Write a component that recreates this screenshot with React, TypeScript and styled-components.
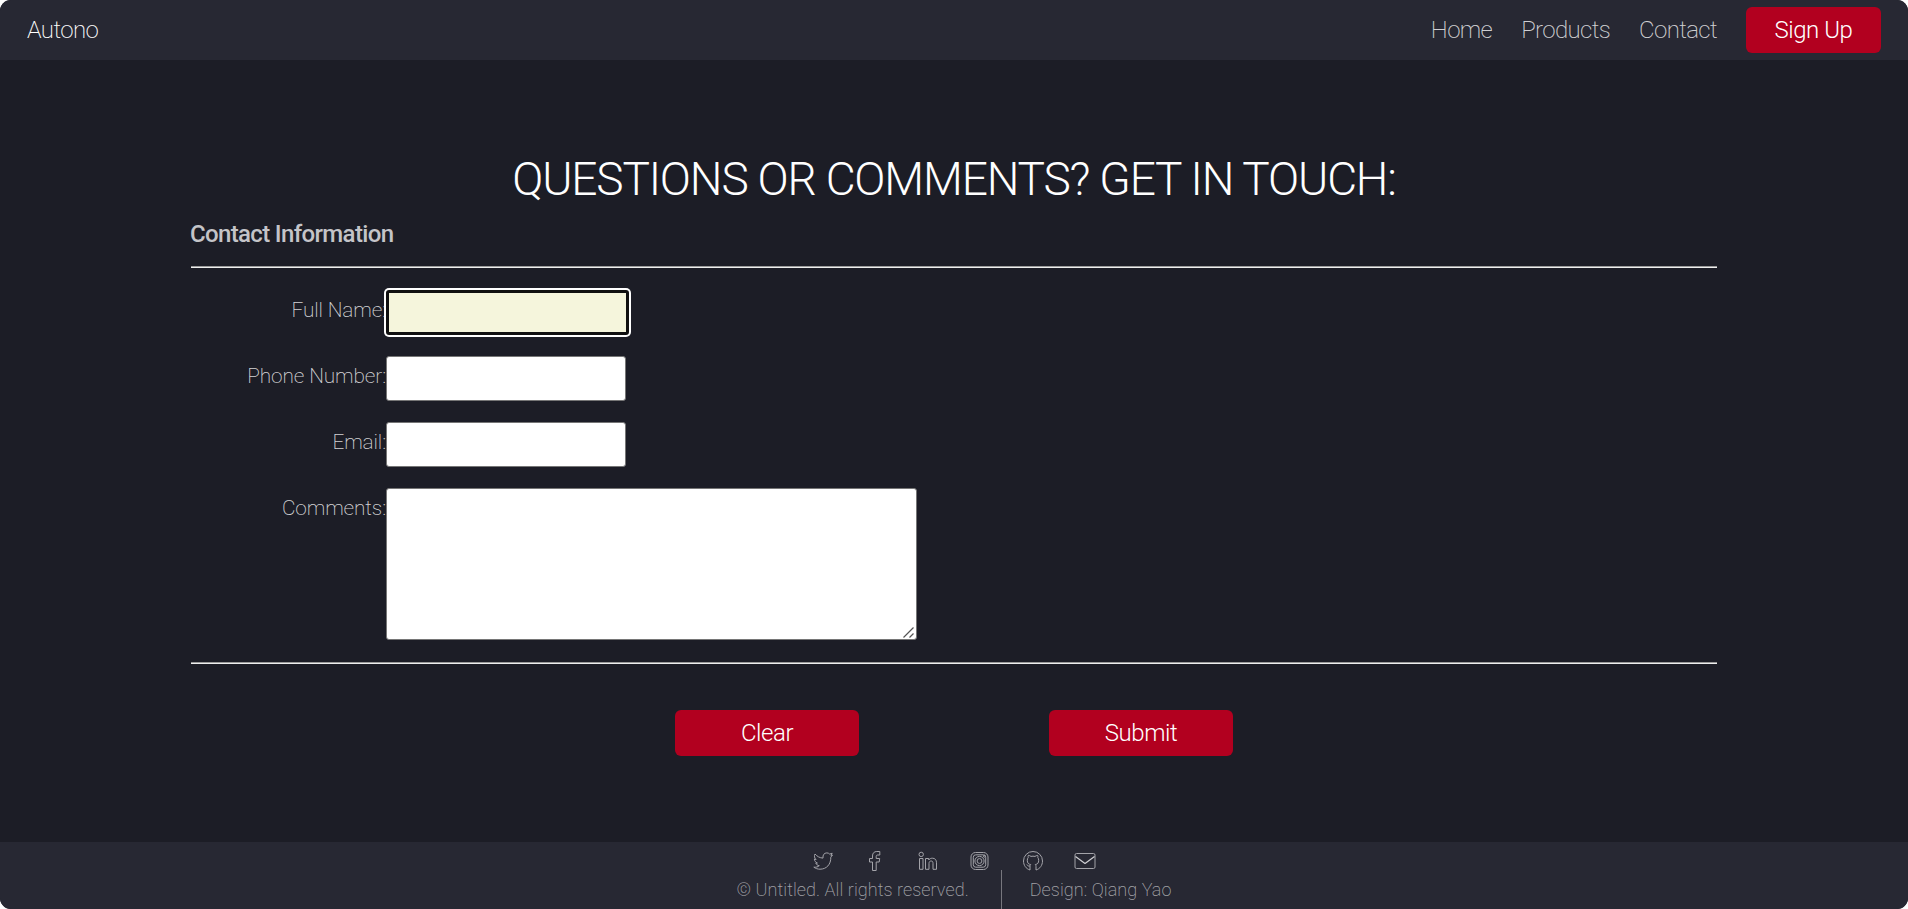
import React from "react";
import styled, { createGlobalStyle } from "styled-components";

const Global = createGlobalStyle`
  html { background: #fff; }
  body { margin: 0; font-family: Roboto, "Liberation Sans", sans-serif; font-weight: 200; color: #fff; }
  *, *::before, *::after { box-sizing: border-box; }
`;

const Page = styled.div`
  display: flex;
  flex-direction: column;
  height: 909px;
  background: #1c1d26;
  border-radius: 11px;
  overflow: hidden;
`;

const Header = styled.header`
  display: flex;
  align-items: center;
  justify-content: space-between;
  height: 60px;
  padding: 0 27px;
  background: #272833;
`;

const Brand = styled.a`
  font-size: 24px;
  line-height: 60px;
  letter-spacing: -0.6px;
  color: #fff;
`;

const Nav = styled.nav`
  display: flex;
  align-items: center;
`;

const NavLink = styled.a`
  margin-right: 29px;
  font-size: 24px;
  line-height: 60px;
  letter-spacing: -0.63px;
  color: rgba(255, 255, 255, 0.8);
`;

const Button = styled.button<{ $width: number }>`
  width: ${(p) => p.$width}px;
  height: 46px;
  padding: 0;
  border: 0;
  border-radius: 6px;
  background: #b2001f;
  color: #fff;
  font-family: inherit;
  font-size: 24px;
  font-weight: 300;
  letter-spacing: -0.45px;
`;

const Main = styled.main`
  flex: 1;
  display: flex;
  flex-direction: column;
  width: 1526px;
  margin: 0 auto;
  padding-top: 91px;
`;

const Title = styled.h1`
  margin: 0;
  font-size: 46px;
  font-weight: 300;
  line-height: 56px;
  letter-spacing: -1.16px;
  text-align: center;
  white-space: nowrap;
`;

const Legend = styled.h2`
  margin: 12px 0 17px -1px;
  font-size: 24px;
  font-weight: 500;
  line-height: 30px;
  letter-spacing: -0.65px;
  color: #c4c4c8;
`;

const Rule = styled.div`
  height: 2px;
  border-top: 1px solid #9a9a9a;
  border-bottom: 1px solid #eee;
`;

const Fields = styled.form`
  display: flex;
  flex-direction: column;
  gap: 21px;
  padding: 22px 0;
`;

const Row = styled.div`
  display: flex;
  align-items: flex-start;
`;

const Label = styled.label`
  width: 195px;
  font-size: 20.8px;
  line-height: 41px;
  letter-spacing: -0.12px;
  text-align: right;
  color: #d2d2d4;
`;

const Input = styled.input<{ $active?: boolean }>`
  width: 240px;
  height: 45px;
  border: 1px solid #767676;
  border-radius: 3px;
  background: ${(p) => (p.$active ? "#f5f5dc" : "#fff")};
  ${(p) =>
    p.$active &&
    `width: 243px; border: 3px solid #101010; border-radius: 3px;
     box-shadow: 0 0 0 2px #fff; outline: none;`}
`;

const CommentBox = styled.div`
  position: relative;
  display: flex;

  svg {
    position: absolute;
    right: 3px;
    bottom: 2px;
    stroke: #555;
    stroke-width: 1.2;
    pointer-events: none;
  }
`;

const TextArea = styled.textarea`
  width: 531px;
  height: 152px;
  border: 1px solid #767676;
  border-radius: 3px;
  background: #fff;
  resize: none;
`;

const Actions = styled.div`
  display: flex;
  justify-content: center;
  gap: 190px;
  padding-top: 46px;
`;

const Footer = styled.footer`
  height: 67px;
  background: #272833;
`;

const Icons = styled.div`
  display: flex;
  justify-content: center;
  gap: 32.4px;
  height: 28px;
  padding-top: 9px;

  svg {
    width: 20px;
    height: 20px;
    overflow: visible;
    fill: none;
    stroke: #a3a3a9;
    stroke-width: 1;
    stroke-linejoin: round;
  }
`;

const Credits = styled.div`
  display: flex;
  justify-content: center;
  height: 39px;
  font-size: 18px;
  line-height: 39px;
  letter-spacing: 0.07px;
  color: rgba(255, 255, 255, 0.58);
`;

const Credit = styled.span`
  padding-right: 32px;

  & + & {
    padding: 0 0 0 28px;
    border-left: 1px solid #77777e;
  }
`;

export default function App() {
  return (
    <>
      <Global />
      <Page>
        <Header>
          <Brand>Autono</Brand>
          <Nav>
            <NavLink>Home</NavLink>
            <NavLink>Products</NavLink>
            <NavLink>Contact</NavLink>
            <Button $width={135}>Sign Up</Button>
          </Nav>
        </Header>
        <Main>
          <Title>QUESTIONS OR COMMENTS? GET IN TOUCH:</Title>
          <Legend>Contact Information</Legend>
          <Rule />
          <Fields>
            <Row><Label>Full Name:</Label><Input $active /></Row>
            <Row><Label>Phone Number:</Label><Input /></Row>
            <Row><Label>Email:</Label><Input /></Row>
            <Row>
              <Label>Comments:</Label>
              <CommentBox>
                <TextArea />
                <svg width="11" height="11" viewBox="0 0 11 11"><path d="M.5 10.500l10-10M6.500 10.500l4-4" /></svg>
              </CommentBox>
            </Row>
          </Fields>
          <Rule />
          <Actions>
            <Button $width={184}>Clear</Button>
            <Button $width={184}>Submit</Button>
          </Actions>
        </Main>
        <Footer>
          <Icons>
            <svg viewBox="0 0 20 20"><path d="M.8 16.2c2.2.2 4-.3 5.500-1.500-1.800-.2-3-1.200-3.500-2.700h1.600C2.500 11.300 1.400 9.900 1.400 8l1.700.5C1.300 6.900 1 5 2 3c2.200 2.500 4.700 3.900 8 4.100C9.600 4 11.200 1.900 13.800 1.900c1.200 0 2.100.4 2.900 1.200l2.500-.9-1.300 2.200 1.600-.3-1.700 2C18 13.500 13.500 18.200 7 18.200c-2.300 0-4.400-.7-6.200-2z" /></svg>
            <svg viewBox="0 0 20 20"><path d="M7.500 19.500V11h-3V7.500h3V5c0-3 1.700-4.500 4.300-4.500h3V4h-2c-1.200 0-1.600.5-1.600 1.500v2h3.500l-.5 3.500h-3v8.500z" /></svg>
            <svg viewBox="0 0 20 20"><circle cx="3.200" cy="3.400" r="2.200" /><path d="M1.500 7.500H5v10.800H1.500zM7.500 7.500h3.300V9c.8-1.200 1.900-1.800 3.500-1.800 2.800 0 4.200 1.700 4.200 4.600v6.500H15v-6c0-1.500-.6-2.300-1.800-2.300-1.400 0-2.200.9-2.200 2.500v5.800H7.500z" /></svg>
            <svg viewBox="0 0 20 20"><rect x="1" y="1.500" width="17" height="17" rx="4.500" /><rect x="3.300" y="3.800" width="12.400" height="12.400" rx="2.500" /><circle cx="9.500" cy="10" r="4.600" /><circle cx="9.500" cy="10" r="2.400" /><circle cx="14.400" cy="5.200" r="1" /></svg>
            <svg viewBox="0 0 20 20"><path d="M7 19c-4-1.200-6.500-4.800-6.500-9a9.500 9.500 0 0 1 19 0c0 4.200-2.500 7.800-6.500 9v-3.500c0-1-.2-1.500-.7-2 2.300-.3 3.400-1.500 3.400-4.200 0-1.200-.3-2-.9-2.700.2-.7.200-1.500-.1-2.200-1 0-1.900.5-2.700 1a9 9 0 0 0-4 0c-.8-.5-1.700-1-2.700-1-.3.700-.3 1.500-.1 2.200-.6.700-.9 1.500-.9 2.700 0 2.700 1.100 3.900 3.400 4.200-.4.400-.6.800-.7 1.400-1.400.5-2.400 0-3.100-1.400M7 15v4" /></svg>
            <svg viewBox="0 0 20 20"><rect x="0" y="2.500" width="20" height="15" rx="1.500" /><path d="M.5 5.500l9.500 7 9.500-7" stroke="#d0d0d4" strokeWidth="1.200" /></svg>
          </Icons>
          <Credits>
            <Credit>© Untitled. All rights reserved.</Credit>
            <Credit>Design: Qiang Yao</Credit>
          </Credits>
        </Footer>
      </Page>
    </>
  );
}
